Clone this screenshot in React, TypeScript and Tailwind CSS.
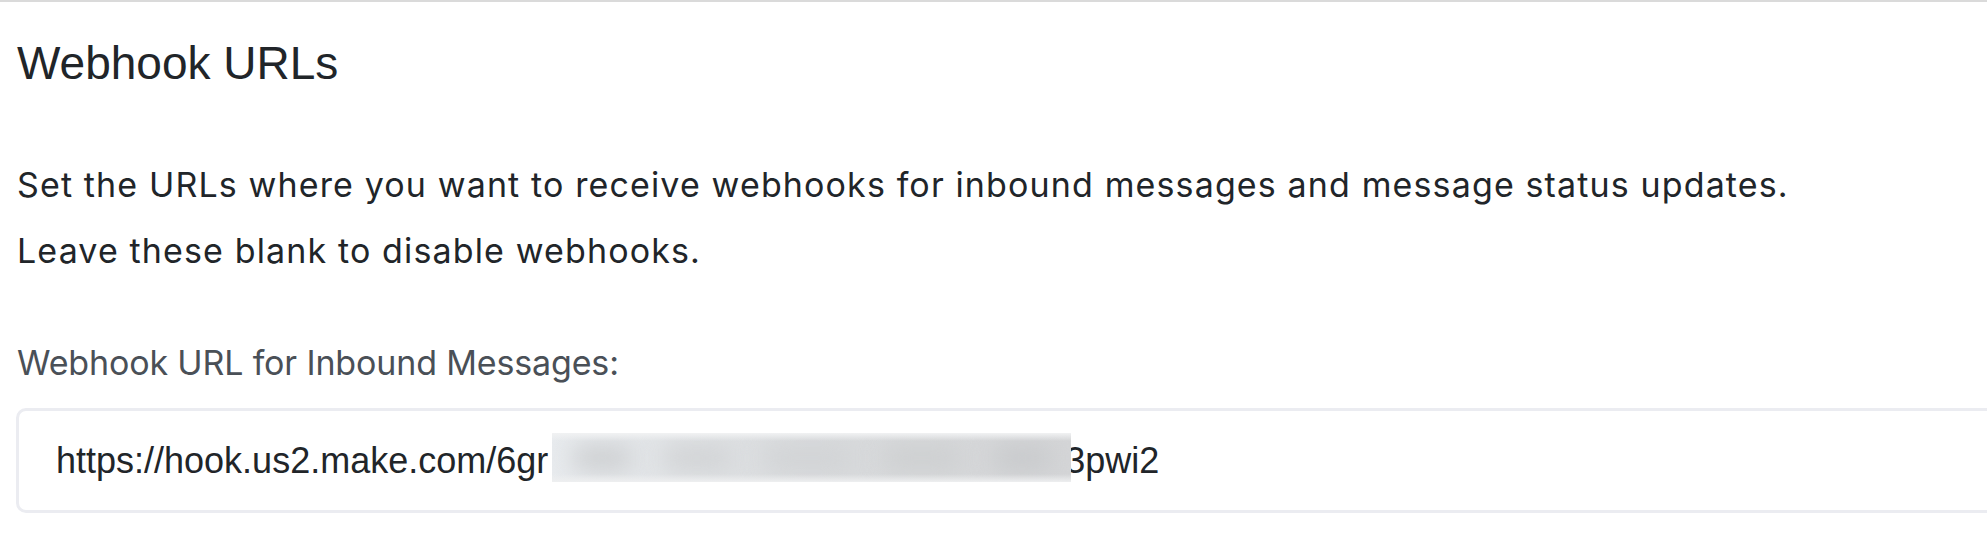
import React from "react";

const BLOBS = [
  { left: 20, w: 60, o: "bg-[#c9cbcd]" },
  { left: 110, w: 70, o: "bg-[#cfd1d3]" },
  { left: 210, w: 90, o: "bg-[#d0d2d4]" },
  { left: 330, w: 80, o: "bg-[#cccecf]" },
  { left: 440, w: 60, o: "bg-[#c6c8ca]" },
];

export default function App() {
  return (
    <div className="h-[537px] w-full overflow-hidden border-t-2 border-[#dadada] bg-white pl-[17px] text-[#212529]">
      <h2 className="mt-[34px] font-['Liberation_Sans',Arial,sans-serif] text-[46px] leading-[55px] font-normal text-[#212529]">
        Webhook URLs
      </h2>

      <div className="mt-[61px] font-['Inter','Noto_Sans',sans-serif] text-[34px] leading-[66px] tracking-[1.13px]">
        <p>Set the URLs where you want to receive webhooks for inbound messages and message status updates.</p>
        <p>Leave these blank to disable webhooks.</p>
      </div>

      <label className="mt-[59px] block font-['Inter','Noto_Sans',sans-serif] text-[34px] leading-[40px] tracking-[-0.15px] text-[#4a5057]">
        Webhook URL for Inbound Messages:
      </label>

      <div className="relative mt-[25px] -ml-px flex h-[105px] w-[2100px] items-center rounded-[10px] border-[3px] border-[#ebecf1] bg-white pl-[37px] font-['Liberation_Sans',Arial,sans-serif] text-[36px] leading-[36px] text-[#212529]">
        <span>https://hook.us2.make.com/6gr</span>
        <span className="inline-block w-[517px]" />
        <span>3pwi2</span>
        <div className="absolute top-[22px] left-[533px] h-[49px] w-[519px] overflow-hidden bg-linear-to-r from-[#e8ebee] via-[#d9dbdd] to-[#d4d5d7]">
          {BLOBS.map((b) => (
            <div
              key={b.left}
              className={`absolute top-[14px] h-[22px] rounded-full blur-md ${b.o}`}
              style={{ left: b.left, width: b.w }}
            />
          ))}
          <div className="absolute inset-x-0 top-0 h-[8px] bg-linear-to-b from-[#f1f2f3] to-transparent" />
          <div className="absolute inset-x-0 bottom-0 h-[8px] bg-linear-to-t from-[#eeeff0] to-transparent" />
        </div>
      </div>
    </div>
  );
}
